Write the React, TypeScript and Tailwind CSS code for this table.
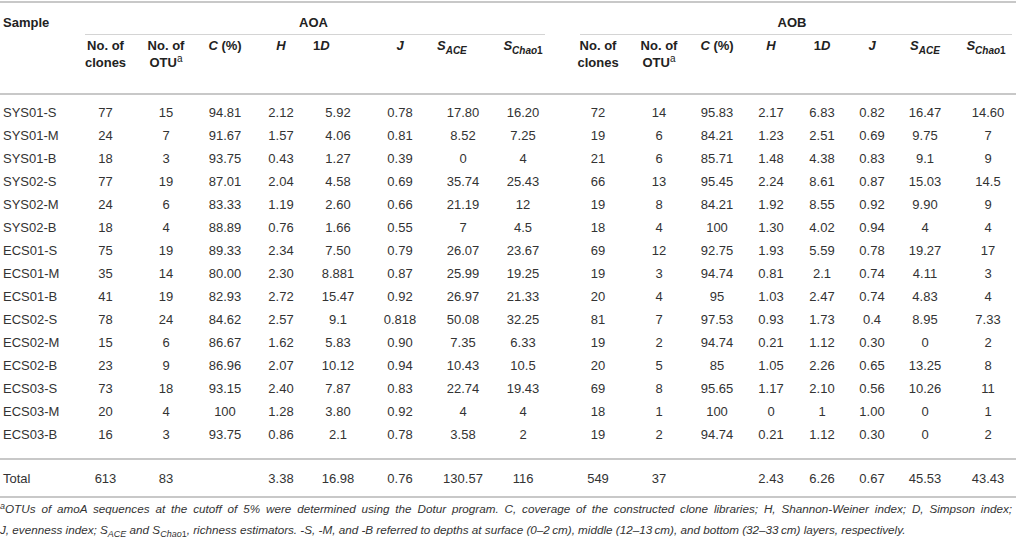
import React from 'react';

type Row = [string, ...string[]];

const rows: Row[] = [
  ['SYS01-S', '77', '15', '94.81', '2.12', '5.92', '0.78', '17.80', '16.20', '72', '14', '95.83', '2.17', '6.83', '0.82', '16.47', '14.60'],
  ['SYS01-M', '24', '7', '91.67', '1.57', '4.06', '0.81', '8.52', '7.25', '19', '6', '84.21', '1.23', '2.51', '0.69', '9.75', '7'],
  ['SYS01-B', '18', '3', '93.75', '0.43', '1.27', '0.39', '0', '4', '21', '6', '85.71', '1.48', '4.38', '0.83', '9.1', '9'],
  ['SYS02-S', '77', '19', '87.01', '2.04', '4.58', '0.69', '35.74', '25.43', '66', '13', '95.45', '2.24', '8.61', '0.87', '15.03', '14.5'],
  ['SYS02-M', '24', '6', '83.33', '1.19', '2.60', '0.66', '21.19', '12', '19', '8', '84.21', '1.92', '8.55', '0.92', '9.90', '9'],
  ['SYS02-B', '18', '4', '88.89', '0.76', '1.66', '0.55', '7', '4.5', '18', '4', '100', '1.30', '4.02', '0.94', '4', '4'],
  ['ECS01-S', '75', '19', '89.33', '2.34', '7.50', '0.79', '26.07', '23.67', '69', '12', '92.75', '1.93', '5.59', '0.78', '19.27', '17'],
  ['ECS01-M', '35', '14', '80.00', '2.30', '8.881', '0.87', '25.99', '19.25', '19', '3', '94.74', '0.81', '2.1', '0.74', '4.11', '3'],
  ['ECS01-B', '41', '19', '82.93', '2.72', '15.47', '0.92', '26.97', '21.33', '20', '4', '95', '1.03', '2.47', '0.74', '4.83', '4'],
  ['ECS02-S', '78', '24', '84.62', '2.57', '9.1', '0.818', '50.08', '32.25', '81', '7', '97.53', '0.93', '1.73', '0.4', '8.95', '7.33'],
  ['ECS02-M', '15', '6', '86.67', '1.62', '5.83', '0.90', '7.35', '6.33', '19', '2', '94.74', '0.21', '1.12', '0.30', '0', '2'],
  ['ECS02-B', '23', '9', '86.96', '2.07', '10.12', '0.94', '10.43', '10.5', '20', '5', '85', '1.05', '2.26', '0.65', '13.25', '8'],
  ['ECS03-S', '73', '18', '93.15', '2.40', '7.87', '0.83', '22.74', '19.43', '69', '8', '95.65', '1.17', '2.10', '0.56', '10.26', '11'],
  ['ECS03-M', '20', '4', '100', '1.28', '3.80', '0.92', '4', '4', '18', '1', '100', '0', '1', '1.00', '0', '1'],
  ['ECS03-B', '16', '3', '93.75', '0.86', '2.1', '0.78', '3.58', '2', '19', '2', '94.74', '0.21', '1.12', '0.30', '0', '2'],
];

const total: Row = ['Total', '613', '83', '', '3.38', '16.98', '0.76', '130.57', '116', '549', '37', '', '2.43', '6.26', '0.67', '45.53', '43.43'];

// column widths, the 10th entry is the gap between AOA and AOB
const widths = [75, 61, 60, 58, 54, 60, 64, 62, 58, 16, 60, 62, 54, 54, 48, 52, 54, 64];

const Sace = () => (
  <span className="italic">
    S<span className="relative top-[4px] text-[10px]">ACE</span>
  </span>
);

const Schao = () => (
  <span>
    <span className="italic">S</span>
    <span className="relative top-[4px] text-[10px]">
      <span className="italic">Chao</span>1
    </span>
  </span>
);

const subHeaders = (side: 'l' | 'r') => [
  <span key="n">No. of<br />clones</span>,
  <span key="o">No. of<br />OTU<span className="relative top-[-5px] font-normal text-[10px]">a</span></span>,
  <span key="c"><span className="italic">C</span> (%)</span>,
  <span key="h" className="italic">H</span>,
  <span key="d" className={side === 'l' ? 'block text-left pl-[5px]' : ''}>1<span className="italic">D</span></span>,
  <span key="j" className="italic">J</span>,
  <span key="s" className={side === 'l' ? 'block text-left pl-[5px]' : ''}><Sace /></span>,
  <span key="k"><Schao /></span>,
];

const DataRow: React.FC<{ row: Row; className?: string }> = ({ row, className }) => (
  <tr className={className}>
    <td className="pl-[3px] text-left">{row[0]}</td>
    {row.slice(1, 9).map((v, i) => (
      <td key={'a' + i} className="text-center">{v}</td>
    ))}
    <td />
    {row.slice(9).map((v, i) => (
      <td key={'b' + i} className={i === 7 ? 'text-center pl-2' : 'text-center'}>{v}</td>
    ))}
  </tr>
);

export default function App() {
  return (
    <div className="w-[1016px] h-[540px] bg-white overflow-hidden text-[13px] leading-[17px] text-[#333]" style={{ fontFamily: '"Liberation Sans", Arial, sans-serif' }}>
      <div className="h-px" />
      <table className="table-fixed border-collapse w-[1016px]">
        <colgroup>
          {widths.map((w, i) => (
            <col key={i} style={{ width: w }} />
          ))}
        </colgroup>
        <thead className="text-[#222] font-bold">
          <tr className="border-t-2 border-[#c8c8c8]">
            <th rowSpan={2} className="text-left align-top pl-[3px] pt-[11px] font-bold">Sample</th>
            <th colSpan={8} className="pt-[11px] font-bold">
              AOA
              <div className="mt-[3px] ml-[10px] mr-[7px] h-px bg-[#d4d4d4]" />
            </th>
            <th rowSpan={2} />
            <th colSpan={8} className="pt-[11px] font-bold">
              AOB
              <div className="mt-[3px] ml-[12px] mr-[4px] h-px bg-[#d4d4d4]" />
            </th>
          </tr>
          <tr className="border-b-2 border-[#c8c8c8]">
            {subHeaders('l').map((h, i) => (
              <th key={'l' + i} className="align-top pt-[2px] pb-[21px] font-bold text-center">{h}</th>
            ))}
            {subHeaders('r').map((h, i) => (
              <th key={'r' + i} className={i === 7 ? 'align-top pt-[2px] pb-[21px] font-bold text-center pl-1' : 'align-top pt-[2px] pb-[21px] font-bold text-center'}>{h}</th>
            ))}
          </tr>
        </thead>
        <tbody>
          <tr className="h-[7px]"><td colSpan={18} /></tr>
          {rows.map((r) => (
            <DataRow key={r[0]} row={r} className="h-[23px]" />
          ))}
          <tr className="h-[13px]"><td colSpan={18} /></tr>
          <DataRow row={total} className="h-[38px] border-y-2 border-[#c8c8c8]" />
        </tbody>
      </table>
      <div className="pt-[1px] pr-[4px] text-[11.7px] leading-[19px] italic text-[#333] whitespace-nowrap">
        <div className="text-justify [text-align-last:justify]">
          <span className="relative top-[-4px] text-[9px]">a</span>OTUs of amoA sequences at the cutoff of 5% were determined using the Dotur program. C, coverage of the constructed clone libraries; H, Shannon-Weiner index; D, Simpson index;
        </div>
        <div>
          J, evenness index; S<span className="relative top-[3px] text-[9px]">ACE</span> and S<span className="relative top-[3px] text-[9px]">Chao<span className="not-italic">1</span></span>, richness estimators. -S, -M, and -B referred to depths at surface (0–2&#8201;cm), middle (12–13&#8201;cm), and bottom (32–33&#8201;cm) layers, respectively.
        </div>
      </div>
    </div>
  );
}
